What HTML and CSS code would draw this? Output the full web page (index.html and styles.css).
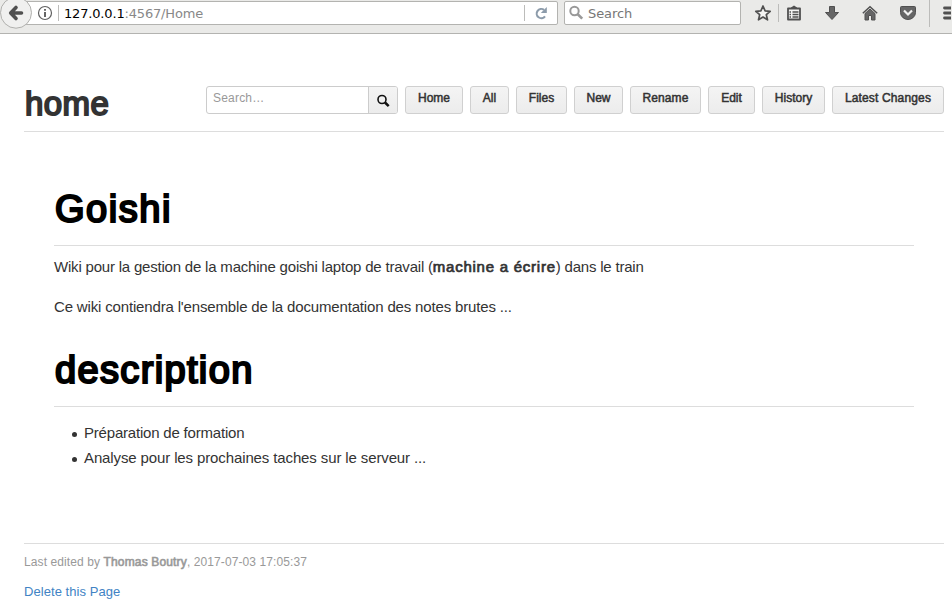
FILE: index.html
```html
<!DOCTYPE html>
<html lang="fr">
<head>
<meta charset="utf-8">
<title>Home</title>
<link rel="stylesheet" href="styles.css">
</head>
<body>
<header class="browser">
  <svg class="back" width="32" height="30" viewBox="0 0 32 30"><circle cx="16" cy="12.700" r="15.500" fill="#f0f0ef" stroke="#b0b0ad"/><path d="M16 7.500L10.700 13l5.300 5.500M11.500 13H21.500" fill="none" stroke="#505050" stroke-width="3.600" stroke-linecap="round" stroke-linejoin="round"/></svg>
  <div class="address">
    <svg class="info" width="16" height="16" viewBox="0 0 16 16"><circle cx="8" cy="8" r="6.500" fill="none" stroke="#606060" stroke-width="1.200"/><path d="M8 4v1.800M8 7v5" stroke="#555" stroke-width="1.800"/></svg>
    <span class="sep"></span>
    <span class="url"><b>127.0.0.1</b>:4567/Home</span>
    <span class="sep reload-sep"></span>
    <svg class="reload" width="14" height="14" viewBox="0 0 14 14"><path d="M10 3.800A4.600 4.600 0 1 0 11 10.300" fill="none" stroke="#8c9baa" stroke-width="2.100"/><path d="M12.800 1V7H6.800Z" fill="#8c9baa"/></svg>
  </div>
  <div class="websearch">
    <svg width="16" height="16" viewBox="0 0 16 16"><circle cx="5.500" cy="6" r="4.200" fill="none" stroke="#999" stroke-width="2"/><path d="M8.500 9l4.700 4.700" stroke="#999" stroke-width="2.600"/></svg>
    <span>Search</span>
  </div>
  <div class="tools">
    <svg width="18" height="18" viewBox="0 0 18 18"><path d="M9 2l2.100 4.800 5.100.5-3.900 3.400 1.200 5.100L9 13.100l-4.500 2.700 1.200-5.100-3.900-3.400 5.100-.5Z" fill="#f4f4f3" stroke="#505050" stroke-width="1.700" stroke-linejoin="round"/></svg>
    <span class="sep"></span>
    <svg width="18" height="18" viewBox="0 0 18 18"><path d="M3 4.500h12v11H3Z" fill="#f4f4f3" stroke="#505050" stroke-width="1.800" stroke-linejoin="round"/><path d="M6 5V3.500L9 1.500l3 2V5Z" fill="#505050"/><path d="M4.500 8H6m1.500 0h6M4.500 10.500H6m1.500 0h6M4.500 13H6m1.500 0h6" stroke="#505050" stroke-width="1.300"/></svg>
    <svg width="18" height="18" viewBox="0 0 18 18"><path d="M6.500 2.500h5v6H15.500L9 15.500 2.500 8.500h4Z" fill="#666" stroke="#505050" stroke-linejoin="round"/></svg>
    <svg width="18" height="18" viewBox="0 0 18 18"><path d="M4 9.500l5-4.500 5 4.500V16h-3.500v-4.500h-3V16H4Z" fill="#666" stroke="#505050"/><path d="M1.800 9.200L9 2.800l7.200 6.400" fill="none" stroke="#505050" stroke-width="1.500"/></svg>
    <svg width="18" height="18" viewBox="0 0 18 18"><path d="M2.500 2.500h13q1 0 1 1V8.500A7.500 7 0 0 1 1.500 8.500V3.500q0-1 1-1Z" fill="#666" stroke="#505050"/><path d="M5 6.500l4 4 4-4" fill="none" stroke="#f2f2f1" stroke-width="2.200"/></svg>
    <span class="sep menu-sep"></span>
    <svg class="menu" width="10" height="18" viewBox="0 0 10 18"><path d="M3.500 4h12M3.500 9h12M3.500 14h12" stroke="#505050" stroke-width="2.800" stroke-linecap="round"/></svg>
  </div>
</header>
<main class="page">
  <div class="head">
    <h1 class="title">home</h1>
    <nav class="actions">
      <div class="find"><span class="placeholder">Search…</span><span class="go"><svg width="14" height="14" viewBox="0 0 14 14"><circle cx="5" cy="5.500" r="4" fill="none" stroke="#111" stroke-width="1.600"/><path d="M8 8.500l3.700 3.700" stroke="#111" stroke-width="2.500"/></svg></span></div>
      <a class="btn w-home">Home</a>
      <a class="btn w-all">All</a>
      <a class="btn w-files">Files</a>
      <a class="btn w-new">New</a>
      <a class="btn w-rename">Rename</a>
      <a class="btn w-edit">Edit</a>
      <a class="btn w-history">History</a>
      <a class="btn w-latest">Latest Changes</a>
    </nav>
  </div>
  <article class="content">
    <h1 class="first">Goishi</h1>
    <p>Wiki pour la gestion de la machine goishi laptop de travail (<strong>machine a écrire</strong>) dans le train</p>
    <p>Ce wiki contiendra l'ensemble de la documentation des notes brutes ...</p>
    <h1 class="second">description</h1>
    <ul>
      <li>Préparation de formation</li>
      <li class="analyse">Analyse pour les prochaines taches sur le serveur ...</li>
    </ul>
  </article>
  <footer class="foot">
    <p class="edited">Last edited by <b>Thomas Boutry</b>, 2017-07-03 17:05:37</p>
    <p class="delete"><a>Delete this Page</a></p>
  </footer>
</main>
</body>
</html>
```
FILE: styles.css
```css
* { box-sizing: border-box; }
body { margin: 0; background: #fff; color: #333; font-family: "Liberation Sans", sans-serif; overflow: hidden; }
h1, p, ul { margin: 0; padding: 0; }
svg { display: block; flex: none; }
.browser { display: flex; align-items: flex-start; height: 34px; background: #eaeae8; border-bottom: 1px solid #b3b3b0; font: 13px/16px "DejaVu Sans", sans-serif; overflow: hidden; }
.back { z-index: 1; }
.address { display: flex; align-items: center; width: 540px; height: 24px; margin: 1px 0 0 -14px; padding-left: 18px; background: #fff; border: 1px solid #b3b3b0; border-radius: 2px; }
.info { margin-right: 5px; }
.sep { width: 1px; height: 16px; background: #bcbcba; flex: none; }
.url { margin-left: 5px; padding-top: 1px; color: #888; white-space: nowrap; letter-spacing: -.17px; }
.url b { color: #000; font-weight: 400; }
.reload-sep { margin-left: auto; }
.reload { margin: 0 9px; }
.websearch { display: flex; align-items: center; width: 177px; height: 24px; margin: 1px 0 0 6px; padding-left: 4px; gap: 3px; color: #777; background: #fff; border: 1px solid #b3b3b0; border-radius: 2px; }
.websearch span { padding-top: 1px; letter-spacing: -.1px; }
.tools { display: flex; align-items: center; height: 26px; margin-left: 13px; }
.tools svg + svg { margin-left: 20px; }
.tools .sep { height: 18px; margin: 0 6px; }
.tools .menu-sep { height: 28px; margin: 0 11px 0 12px; }
.page { padding: 0 8px 0 24px; }
.head { display: flex; align-items: flex-start; justify-content: space-between; height: 98px; padding-top: 52px; border-bottom: 1px solid #ddd; }
.title { padding-left: 1px; font-size: 33px; line-height: 36px; font-weight: 400; -webkit-text-stroke: 1.9px #333; letter-spacing: .4px; }
.actions { display: flex; gap: 7px; }
.find { display: flex; width: 192px; height: 28px; border: 1px solid #ccc; border-radius: 3px; overflow: hidden; font-size: 12px; }
.placeholder { flex: 1; padding-left: 6px; line-height: 22px; color: #999; letter-spacing: .2px; }
.go { width: 29px; padding: 7px 0 0 8px; border-left: 1px solid #ccc; background: linear-gradient(#f4f4f4, #ececec); }
.btn { height: 28px; border: 1px solid #d0d0d0; border-radius: 3px; background: linear-gradient(#f4f4f4, #ececec); font-size: 12px; line-height: 22px; text-align: center; white-space: nowrap; color: #333; -webkit-text-stroke: .5px #333; }
.w-home { width: 58px; }
.w-all { width: 39px; }
.w-files { width: 51px; }
.w-new { width: 49px; }
.w-rename { width: 71px; letter-spacing: .1px; }
.w-edit { width: 47px; }
.w-history { width: 63px; }
.w-latest { width: 112px; letter-spacing: .15px; }
.content { padding: 48px 30px 0; height: 411px; font-size: 15px; line-height: 25px; }
.content h1 { height: 66px; padding: 6px 0 0 1px; border-bottom: 1px solid #ddd; color: #000; font-size: 38px; line-height: 46px; font-weight: 400; letter-spacing: 1.35px; -webkit-text-stroke: 2.2px #000; }
.content .first { letter-spacing: 1.55px; }
.content p { margin-top: 8px; margin-bottom: 15px; white-space: nowrap; letter-spacing: -.2px; }
.content p + p { margin-top: 15px; letter-spacing: -.16px; }
.content strong { font-weight: 400; -webkit-text-stroke: .7px #333; letter-spacing: .75px; }
.content .second { margin-top: 22px; }
.content ul { margin-top: 13px; padding-left: 30px; list-style: none; letter-spacing: -.2px; }
.content li { display: flex; align-items: center; }
.content li::before { content: ""; width: 5px; height: 5px; margin: 3px 7px 0 -12px; border-radius: 50%; background: #333; }
.content .analyse { letter-spacing: -.12px; }
.foot { border-top: 1px solid #ddd; color: #999; font-size: 12px; }
.edited { margin-top: 11px; line-height: 15px; letter-spacing: .1px; }
.edited b { font-weight: 400; -webkit-text-stroke: .6px #999; letter-spacing: .15px; }
.delete { margin-top: 14px; font-size: 13px; line-height: 16px; color: #4183c4; letter-spacing: .06px; }
```
